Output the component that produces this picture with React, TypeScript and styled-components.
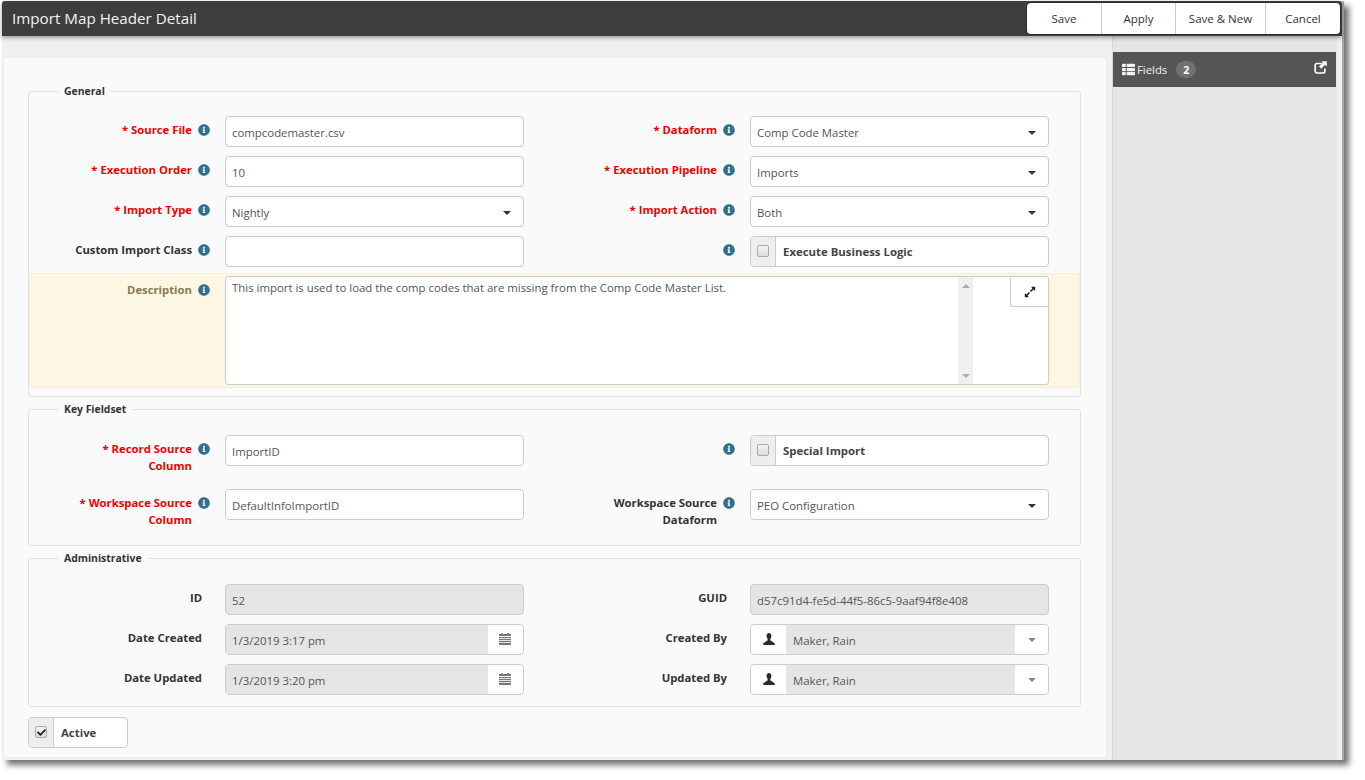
import React from "react";
import styled, { createGlobalStyle } from "styled-components";
import { FaInfoCircle, FaExpandAlt, FaThList, FaCheck } from "react-icons/fa";

const Global = createGlobalStyle`
  html, body { margin: 0; padding: 0; background: #fff; }
  body { font-family: "Open Sans", "Liberation Sans", sans-serif; font-size: 12px; color: #333; min-height: 780px; min-width: 1365px; }
  * { box-sizing: border-box; }
`;

const Win = styled.div`
  margin: 1px 0 0 2px;
  width: 1342px;
  height: 759px;
  background: #f0f0f0;
  display: flex;
  flex-direction: column;
  box-shadow: 5px 5px 6px rgba(0,0,0,.55);
  border-right: 2px solid #a8a8a8;
`;
const Header = styled.header`
  height: 35px;
  flex: none;
  background: #3d3d3d;
  border-radius: 3px 3px 0 0;
  box-shadow: 0 2px 4px rgba(0,0,0,.35);
  display: flex;
  align-items: center;
  justify-content: space-between;
  padding-left: 10px;
  z-index: 2;
`;
const Title = styled.h1`
  margin: 0 0 2px;
  font-size: 15.2px;
  font-weight: 400;
  color: #f2f2f2;
`;
const BtnGroup = styled.div`
  display: flex;
  height: 31px;
  margin-right: 2px;
  background: #fff;
  border-radius: 4px;
  box-shadow: 0 0 0 1px #2e2e2e;
`;
const Btn = styled.button<{ $w: number }>`
  width: ${p => p.$w}px;
  border: 0;
  border-left: 1px solid #ccc;
  background: transparent;
  font: 400 11.5px "Open Sans", sans-serif;
  color: #333;
  padding: 0;
  &:first-child { border-left: 0; }
`;
const Body = styled.div`
  flex: 1;
  display: flex;
  min-height: 0;
`;
const Main = styled.main`
  width: 1104px;
  margin: 21px 0 2px 1px;
  background: #fafafa;
  border: 1px solid #ececec;
  border-radius: 3px;
  padding: 25px 25px 0 24px;
  flex: none;
`;
const Side = styled.aside`
  width: 225px;
  margin-left: 5px;
  background: #e6e6e6;
  border-left: 1px solid #d8d8d8;
  padding-top: 16px;
  flex: none;
`;
const SideHead = styled.div`
  height: 35px;
  width: 223px;
  background: #555;
  color: #f2f2f2;
  display: flex;
  align-items: center;
  padding: 0 9px;
  font-size: 11.3px;
  font-weight: 400;
`;
const Badge = styled.span`
  background: #707070;
  border-radius: 10px;
  width: 20px;
  height: 17px;
  margin-left: 9px;
  color: #fff;
  font-weight: 700;
  font-size: 10.5px;
  display: flex;
  align-items: center;
  justify-content: center;
`;
const SideLink = styled.span`
  margin-left: auto;
  display: flex;
  position: relative;
  top: -2px;
`;
const Set = styled.fieldset<{ $h: number; $mb: number }>`
  margin: 0 0 ${p => p.$mb}px;
  width: 1053px;
  height: ${p => p.$h}px;
  border: 1px solid #e2e2e2;
  border-radius: 3px;
  padding: 0;
  min-inline-size: 0;
`;
const Legend = styled.legend`
  margin-left: 29px;
  padding: 0 6px;
  font-size: 10.4px;
  font-weight: 700;
  color: #333;
  line-height: 16px;
`;
const Rows = styled.div<{ $top: number }>`
  padding-top: ${p => p.$top}px;
  display: flex;
  flex-direction: column;
  gap: 9px;
`;
const Row = styled.div<{ $h?: number }>`
  display: grid;
  grid-template-columns: 525px 1fr;
  height: ${p => p.$h ?? 31}px;
`;
const Cell = styled.div`
  display: grid;
  grid-template-columns: 196px 299px;
  align-items: start;
`;
const LabelBox = styled.div`
  display: flex;
  justify-content: flex-end;
  align-items: flex-start;
  gap: 6px;
  padding: 5px 15px 0 0;
`;
const Label = styled.label<{ $req?: boolean; $plain?: boolean; $tone?: string }>`
  text-align: right;
  font-size: 11.3px;
  font-weight: 700;
  line-height: 17px;
  color: ${p => (p.$req ? "#f00000" : p.$tone ?? "#333")};
  margin-right: ${p => (p.$plain ? 8 : 0)}px;
`;
const Info = styled(FaInfoCircle)`
  color: #31708f;
  font-size: 12px;
  flex: none;
  margin-top: 3px;
`;
const Input = styled.div<{ $off?: boolean }>`
  height: 31px;
  border: 1px solid #ccc;
  border-radius: 4px;
  background: ${p => (p.$off ? "#e5e5e5" : "#fff")};
  color: #555;
  font-size: 11.4px;
  padding: 7px 6px 0;
  line-height: 17px;
  white-space: nowrap;
`;
const SelectBox = styled(Input)`
  display: flex;
  justify-content: space-between;
  padding-right: 0;
`;
const Caret = styled.span<{ $light?: boolean }>`
  width: 33px;
  flex: none;
  position: relative;
  &::after {
    content: "";
    position: absolute;
    left: 13px;
    top: 7px;
    border: 4px solid transparent;
    border-bottom: 0;
    border-top: 4px solid ${p => (p.$light ? "#888" : "#333")};
  }
`;
const Check = styled.div`
  height: 31px;
  display: flex;
  border: 1px solid #ccc;
  border-radius: 4px;
  background: #fff;
  font-size: 11.4px;
  font-weight: 700;
  color: #444;
  overflow: hidden;
`;
const CheckAddon = styled.span`
  width: 25px;
  flex: none;
  background: #eee;
  border-right: 1px solid #ccc;
  display: flex;
  align-items: center;
  justify-content: center;
  padding-bottom: 1px;
`;
const CheckMark = styled.span`
  width: 12px;
  height: 12px;
  border: 1px solid #a9a9a9;
  border-radius: 2px;
  background: linear-gradient(#f4f4f4, #dcdcdc);
  display: flex;
  align-items: center;
  justify-content: center;
  color: #222;
  font-size: 9px;
`;
const CheckText = styled.span`
  padding: 6px 6px 0 7px;
  line-height: 17px;
`;
const Highlight = styled.div`
  margin: 6px 0 0;
  height: 115px;
  background: #fdf6e3;
  border: 1px solid #f6efd9;
  border-radius: 2px;
  display: grid;
  grid-template-columns: 195px 824px;
  padding-top: 2px;
`;
const DescLabel = styled(LabelBox)`
  padding-top: 5px;
`;
const TextArea = styled.div`
  height: 109px;
  background: #fff;
  border: 1px solid #ccc;
  border-radius: 3px;
  display: grid;
  grid-template-columns: 732px 15px 1fr;
  color: #555;
  font-size: 11.4px;
  line-height: 17px;
`;
const TextContent = styled.div`
  padding: 2px 6px;
`;
const ScrollBar = styled.div`
  background: #f0f0f0;
  display: flex;
  flex-direction: column;
  justify-content: space-between;
  align-items: center;
  padding: 7px 0 6px;
  &::before, &::after { content: ""; border: 4px solid transparent; }
  &::before { border-top: 0; border-bottom: 4px solid #aaa; }
  &::after { border-bottom: 0; border-top: 4px solid #aaa; }
`;
const ExpandCell = styled.div`
  display: flex;
  justify-content: flex-end;
`;
const ExpandBtn = styled.span`
  width: 38px;
  height: 30px;
  border-left: 1px solid #ccc;
  border-bottom: 1px solid #ccc;
  border-radius: 0 0 0 3px;
  display: flex;
  align-items: center;
  justify-content: center;
  font-size: 12px;
  color: #222;
`;
const DateBox = styled.div`
  height: 31px;
  border: 1px solid #ccc;
  border-radius: 4px;
  display: flex;
  background: #fff;
  overflow: hidden;
  font-size: 11.4px;
  color: #555;
  line-height: 17px;
`;
const DateText = styled.span`
  flex: 1;
  background: #e5e5e5;
  padding: 7px 6px 0;
`;
const DateIcon = styled.span`
  width: 35px;
  display: flex;
  align-items: center;
  justify-content: center;
  padding-bottom: 1px;
  padding-right: 2px;
`;
const UserIcon = styled.span`
  width: 35px;
  display: flex;
  align-items: center;
  justify-content: center;
  padding-bottom: 1px;
  flex: none;
`;
const UserText = styled.span`
  flex: 1;
  background: #e5e5e5;
  padding: 7px 7px 0;
`;
const LockCaret = styled(Caret)`
  background: #fff;
  &::after { top: 13px; }
`;
const ActiveBox = styled(Check)`
  width: 100px;
  margin-top: 10px;
`;
const ListGlyph = styled(FaThList)`
  font-size: 13px;
  margin-right: 2px;
`;

const Cal = () => (
  <svg width="12" height="12" viewBox="0 0 12 12" fill="#777">
    <rect x="2" y="0" width="1.5" height="2" />
    <rect x="8.500" y="0" width="1.5" height="2" />
    <rect x="0" y="1" width="12" height="2" />
    <rect x="0" y="4" width="12" height="1.2" />
    <rect x="0" y="6" width="12" height="1.2" />
    <rect x="0" y="8" width="12" height="1.2" />
    <rect x="0" y="10" width="12" height="2" />
  </svg>
);
const User = () => (
  <svg width="12" height="12" viewBox="0 0 12 12" fill="#2b2b2b">
    <path d="M6 0C4.600 0 3.600 1 3.600 2.800c0 1.300.4 2.500 1.100 3.200v1.200L.3 10.200V12h11.400v-1.800L7.300 7.200V6c.7-.7 1.100-1.900 1.100-3.200C8.400 1 7.400 0 6 0z" />
  </svg>
);
const ShareOut = () => (
  <svg width="13" height="13" viewBox="0 0 13 13" fill="none">
    <path d="M8 2.500H3A1.800 1.800 0 0 0 1.200 4.300v6A1.800 1.800 0 0 0 3 12h6a1.800 1.800 0 0 0 1.800-1.800V7.500" stroke="#fff" strokeWidth="1.700" />
    <path d="M7.500 0.300H12.800V5.600L11 3.800 7.200 7.800 5 5.600 9 1.800z" fill="#fff" />
  </svg>
);

type F = { label: React.ReactNode; req?: boolean; info?: boolean };
const Lab = ({ label, req, info = true }: F) => (
  <LabelBox>
    {label !== "" && <Label $req={req} $plain={!info}>{req ? <>* {label}</> : label}</Label>}
    {info && <Info />}
  </LabelBox>
);

const TextField = (p: F & { value: string }) => (
  <Cell><Lab {...p} /><Input>{p.value}</Input></Cell>
);
const SelectField = (p: F & { value: string }) => (
  <Cell><Lab {...p} /><SelectBox><span>{p.value}</span><Caret /></SelectBox></Cell>
);
const CheckField = ({ text }: { text: string }) => (
  <Cell><Lab label="" /><Check><CheckAddon><CheckMark /></CheckAddon><CheckText>{text}</CheckText></Check></Cell>
);
const DateField = ({ label, value }: { label: string; value: string }) => (
  <Cell>
    <Lab label={label} info={false} />
    <DateBox><DateText>{value}</DateText><DateIcon><Cal /></DateIcon></DateBox>
  </Cell>
);
const UserField = ({ label }: { label: string }) => (
  <Cell>
    <Lab label={label} info={false} />
    <DateBox><UserIcon><User /></UserIcon><UserText>Maker, Rain</UserText><LockCaret $light /></DateBox>
  </Cell>
);
const OffField = ({ label, value }: { label: string; value: string }) => (
  <Cell><Lab label={label} info={false} /><Input $off>{value}</Input></Cell>
);

export default function App() {
  return (
    <>
      <Global />
      <Win>
        <Header>
          <Title>Import Map Header Detail</Title>
          <BtnGroup>
            <Btn $w={74}>Save</Btn>
            <Btn $w={74}>Apply</Btn>
            <Btn $w={90}>Save &amp; New</Btn>
            <Btn $w={75}>Cancel</Btn>
          </BtnGroup>
        </Header>
        <Body>
          <Main>
            <Set $h={314} $mb={4}>
              <Legend>General</Legend>
              <Rows $top={17}>
                <Row>
                  <TextField req label="Source File" value="compcodemaster.csv" />
                  <SelectField req label="Dataform" value="Comp Code Master" />
                </Row>
                <Row>
                  <TextField req label="Execution Order" value="10" />
                  <SelectField req label="Execution Pipeline" value="Imports" />
                </Row>
                <Row>
                  <SelectField req label="Import Type" value="Nightly" />
                  <SelectField req label="Import Action" value="Both" />
                </Row>
                <Row>
                  <TextField label="Custom Import Class" value="" />
                  <CheckField text="Execute Business Logic" />
                </Row>
              </Rows>
              <Highlight>
                <DescLabel><Label $tone="#8a7b50">Description</Label><Info /></DescLabel>
                <TextArea>
                  <TextContent>This import is used to load the comp codes that are missing from the Comp Code Master List.</TextContent>
                  <ScrollBar />
                  <ExpandCell><ExpandBtn><FaExpandAlt /></ExpandBtn></ExpandCell>
                </TextArea>
              </Highlight>
            </Set>
            <Set $h={145} $mb={4}>
              <Legend>Key Fieldset</Legend>
              <Rows $top={18}>
                <Row $h={45}>
                  <TextField req label={<>Record Source<br />Column</>} value="ImportID" />
                  <CheckField text="Special Import" />
                </Row>
                <Row $h={45}>
                  <TextField req label={<>Workspace Source<br />Column</>} value="DefaultInfoImportID" />
                  <SelectField label={<>Workspace Source<br />Dataform</>} value="PEO Configuration" />
                </Row>
              </Rows>
            </Set>
            <Set $h={157} $mb={0}>
              <Legend>Administrative</Legend>
              <Rows $top={18}>
                <Row>
                  <OffField label="ID" value="52" />
                  <OffField label="GUID" value="d57c91d4-fe5d-44f5-86c5-9aaf94f8e408" />
                </Row>
                <Row>
                  <DateField label="Date Created" value="1/3/2019 3:17 pm" />
                  <UserField label="Created By" />
                </Row>
                <Row>
                  <DateField label="Date Updated" value="1/3/2019 3:20 pm" />
                  <UserField label="Updated By" />
                </Row>
              </Rows>
            </Set>
            <ActiveBox>
              <CheckAddon><CheckMark><FaCheck /></CheckMark></CheckAddon>
              <CheckText>Active</CheckText>
            </ActiveBox>
          </Main>
          <Side>
            <SideHead>
              <ListGlyph />
              Fields
              <Badge>2</Badge>
              <SideLink><ShareOut /></SideLink>
            </SideHead>
          </Side>
        </Body>
      </Win>
    </>
  );
}
